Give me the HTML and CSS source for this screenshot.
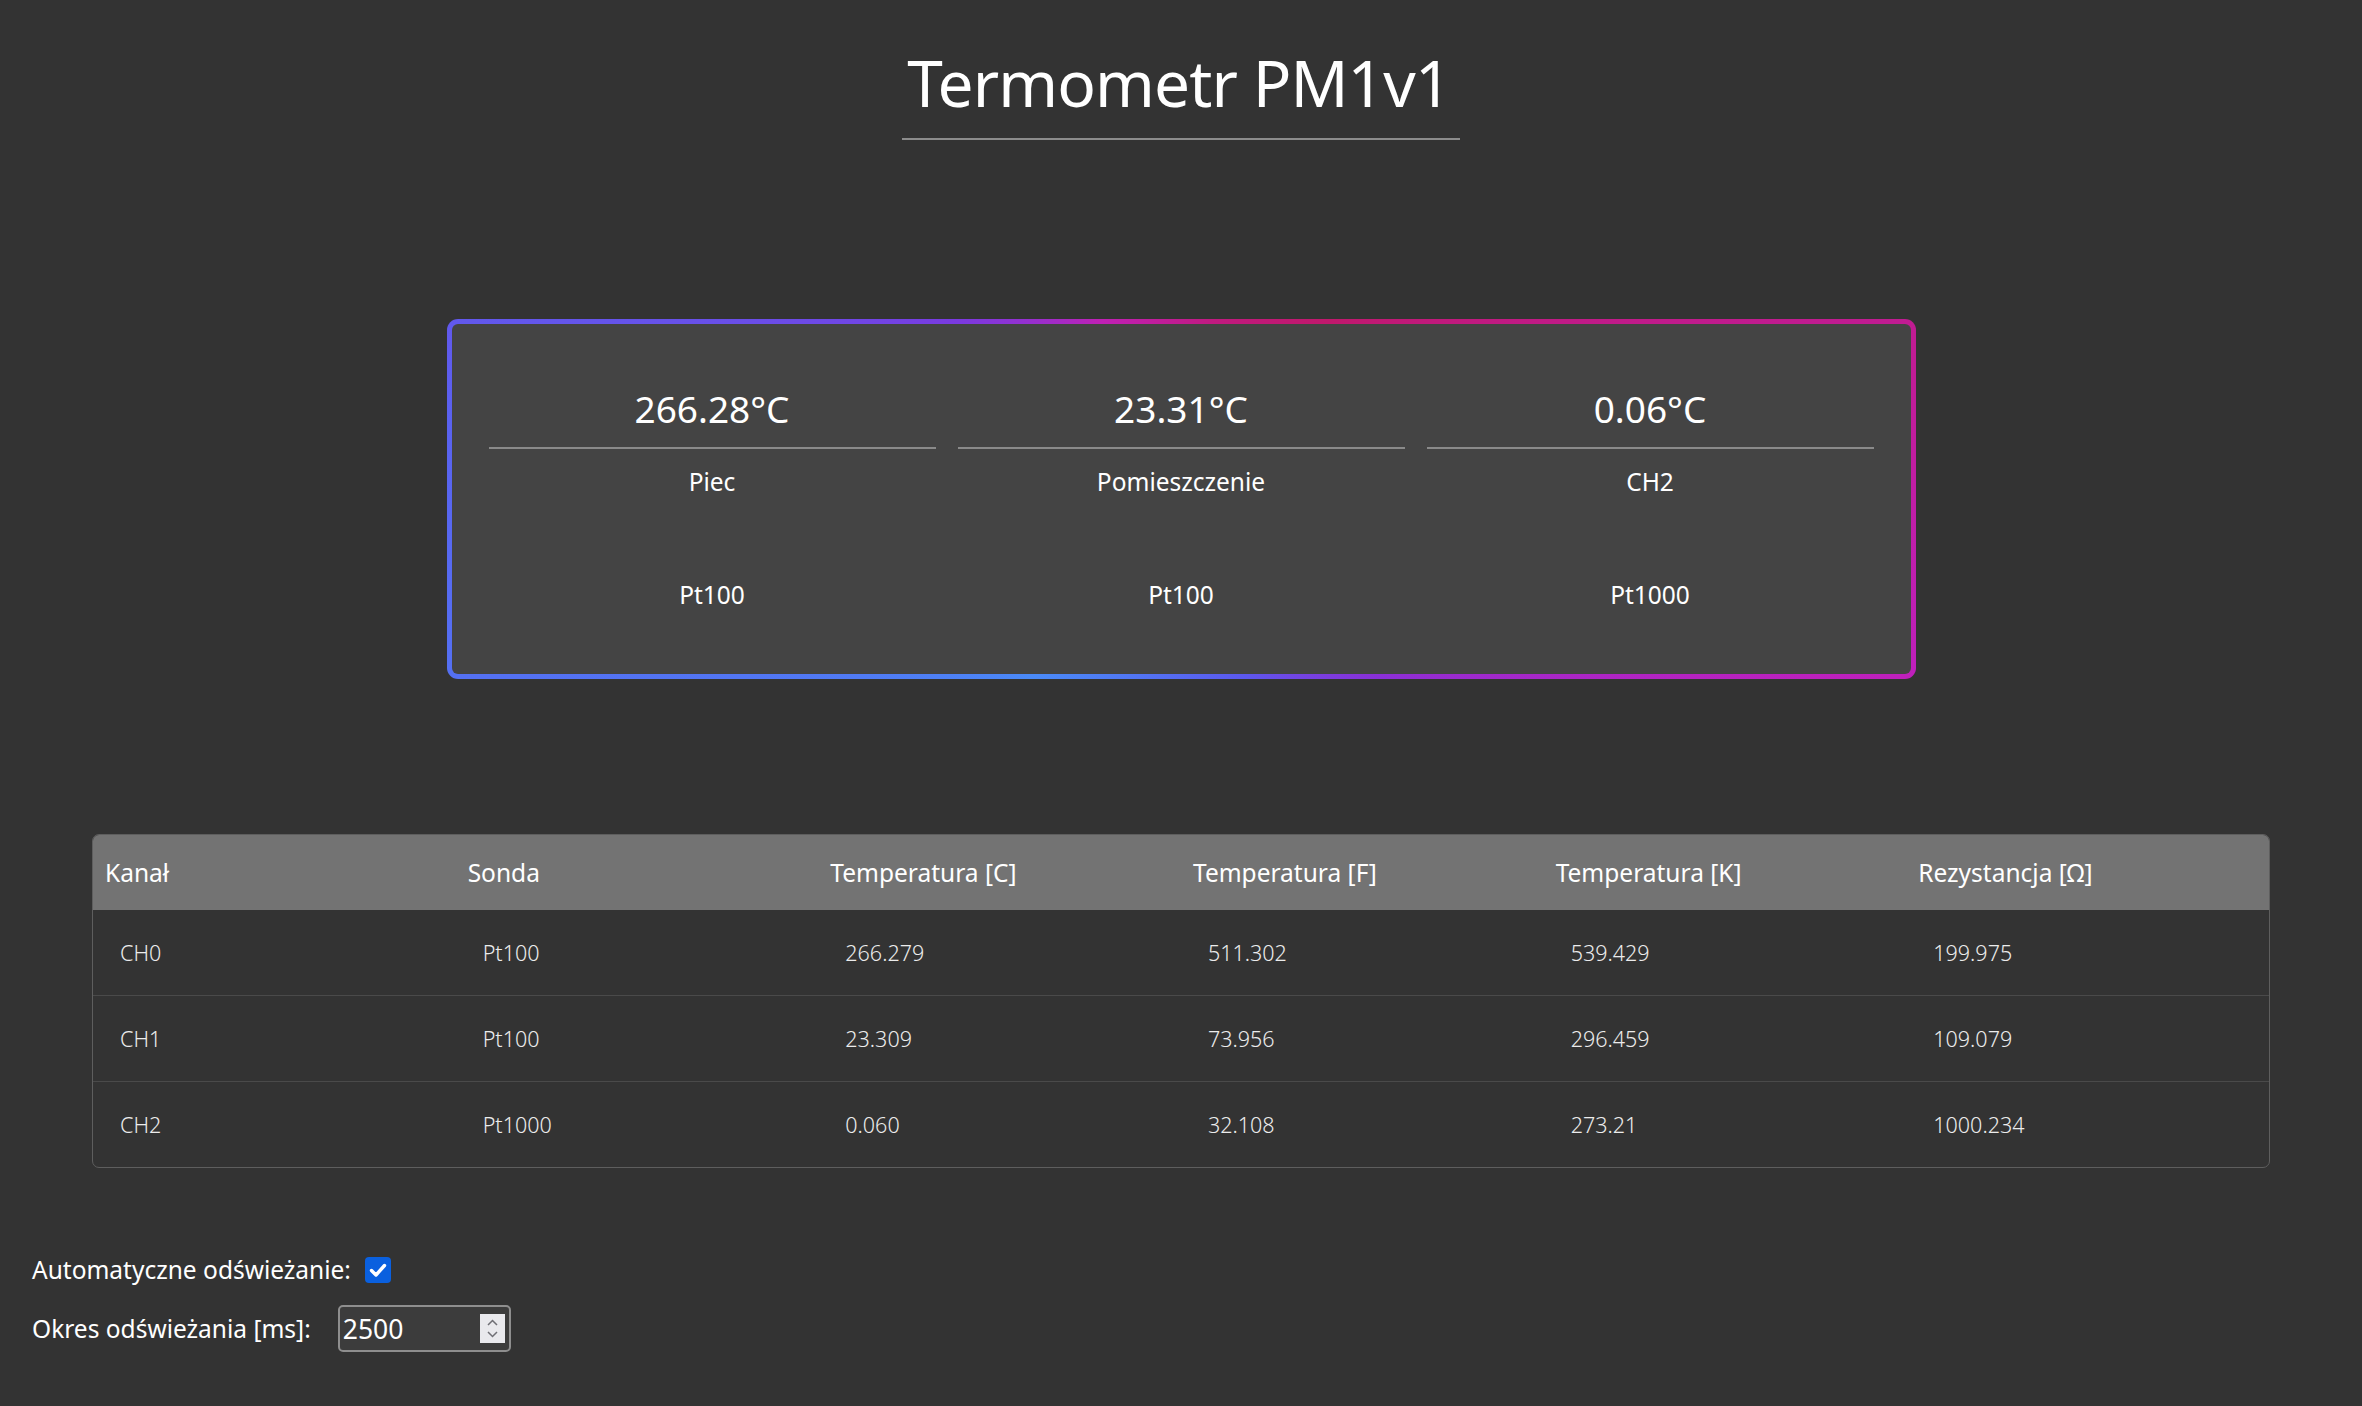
FILE: index.html
```html
<!DOCTYPE html>
<html lang="pl">
<head>
<meta charset="utf-8">
<title>Termometr PM1v1</title>
<link rel="stylesheet" href="styles.css">
</head>
<body>
<header class="top">
  <h1 class="title">Termometr PM1v1</h1>
</header>

<section class="card">
  <div class="sensor">
    <div class="value">266.28°C</div>
    <div class="name">Piec</div>
    <div class="probe">Pt100</div>
  </div>
  <div class="sensor">
    <div class="value">23.31°C</div>
    <div class="name">Pomieszczenie</div>
    <div class="probe">Pt100</div>
  </div>
  <div class="sensor">
    <div class="value">0.06°C</div>
    <div class="name">CH2</div>
    <div class="probe">Pt1000</div>
  </div>
</section>

<table class="data">
  <thead>
    <tr>
      <th>Kanał</th>
      <th>Sonda</th>
      <th>Temperatura [C]</th>
      <th>Temperatura [F]</th>
      <th>Temperatura [K]</th>
      <th>Rezystancja [Ω]</th>
    </tr>
  </thead>
  <tbody>
    <tr>
      <td>CH0</td><td>Pt100</td><td>266.279</td><td>511.302</td><td>539.429</td><td>199.975</td>
    </tr>
    <tr>
      <td>CH1</td><td>Pt100</td><td>23.309</td><td>73.956</td><td>296.459</td><td>109.079</td>
    </tr>
    <tr>
      <td>CH2</td><td>Pt1000</td><td>0.060</td><td>32.108</td><td>273.21</td><td>1000.234</td>
    </tr>
  </tbody>
</table>

<div class="controls">
  <div class="row row-check">
    <label class="lbl" for="auto">Automatyczne odświeżanie:</label>
    <span class="check" id="auto" role="checkbox" aria-checked="true">
      <svg width="26" height="26" viewBox="0 0 26 26"><polyline points="6.5,13.5 11,18 19.5,8.5" fill="none" stroke="#fff" stroke-width="3.4" stroke-linecap="round" stroke-linejoin="round"/></svg>
    </span>
  </div>
  <div class="row row-num">
    <label class="lbl" for="period">Okres odświeżania [ms]:</label>
    <div class="num">
      <input id="period" class="num-input" type="text" value="2500">
      <span class="spin">
        <svg width="25" height="29" viewBox="0 0 25 29"><polyline points="8,11 12.5,6.5 17,11" fill="none" stroke="#6f6f75" stroke-width="1.5"/><polyline points="8,18 12.5,22.5 17,18" fill="none" stroke="#6f6f75" stroke-width="1.5"/></svg>
      </span>
    </div>
  </div>
</div>
</body>
</html>
```

FILE: styles.css
```css
html, body {
  margin: 0;
  padding: 0;
}

body {
  background: #333333;
  color: #ffffff;
  font-family: "Noto Sans", "Open Sans", "DejaVu Sans", sans-serif;
  font-size: 24.5px;
  line-height: 36px;
}

.top {
  text-align: center;
  padding-top: 45px;
}

.title {
  display: inline-block;
  margin: 0;
  padding: 0 9px 16px 5px;
  font-size: 64px;
  line-height: 1.2;
  font-weight: 400;
  letter-spacing: -0.9px;
  border-bottom: 2px solid #8c8c8c;
}

.card {
  margin: 179px auto 0;
  box-sizing: border-box;
  width: 1469px;
  border: 5px solid transparent;
  border-radius: 11px;
  background:
    linear-gradient(#444444, #444444) padding-box,
    conic-gradient(from 40deg at 50% 50%,
      #c0186c 0deg,
      #c01c96 40deg,
      #bf20bc 64deg,
      #8a30d8 92deg,
      #5c58ee 120deg,
      #4a8af8 180deg,
      #5a62f0 236deg,
      #7a3ae0 268deg,
      #c020b4 296deg,
      #c01a80 330deg,
      #c0186c 360deg) border-box;
  padding: 63px 37px 61px;
  display: grid;
  grid-template-columns: repeat(3, 1fr);
  column-gap: 22px;
  text-align: center;
}

.value {
  font-size: 37px;
  line-height: 1.2;
  padding-bottom: 16px;
  border-bottom: 2px solid #8a8a8a;
}

.name {
  margin-top: 15px;
}

.probe {
  margin-top: 77px;
}

.data {
  width: 2178px;
  margin: 155px auto 0;
  border-collapse: separate;
  border-spacing: 0;
  table-layout: fixed;
  border: 1px solid #5e5e5e;
  border-radius: 7px;
  overflow: hidden;
}

.data th {
  background: #737373;
  color: #ffffff;
  font-weight: 400;
  text-align: left;
  height: 75px;
  padding: 0 0 0 12px;
  vertical-align: middle;
}

.data td {
  height: 85px;
  padding: 0 0 0 27px;
  border-top: 1px solid #4a4a4a;
  vertical-align: middle;
  font-size: 21.5px;
  font-weight: 300;
  color: #ececec;
}

.data tbody tr:first-child td {
  border-top: 0;
}

.controls {
  margin-top: 84px;
  padding-left: 32px;
  display: flex;
  flex-direction: column;
  row-gap: 17px;
}

.row {
  display: flex;
  align-items: center;
}

.row-check {
  column-gap: 14px;
}

.row-num {
  column-gap: 27px;
}

.check {
  width: 26px;
  height: 26px;
  border-radius: 4px;
  background: #0a60df;
  display: flex;
}

.num {
  width: 173px;
  height: 47px;
  box-sizing: border-box;
  border: 2px solid #8e8e8e;
  border-radius: 5px;
  background: #3c3c3c;
  display: flex;
  align-items: center;
  padding: 0 4px 0 3px;
}

.num-input {
  flex: 1;
  min-width: 0;
  border: 0;
  outline: 0;
  background: transparent;
  color: #ffffff;
  font-family: inherit;
  font-size: 26.5px;
  padding: 0;
}

.spin {
  width: 25px;
  height: 29px;
  background: #e9e9ed;
  display: flex;
}
```
